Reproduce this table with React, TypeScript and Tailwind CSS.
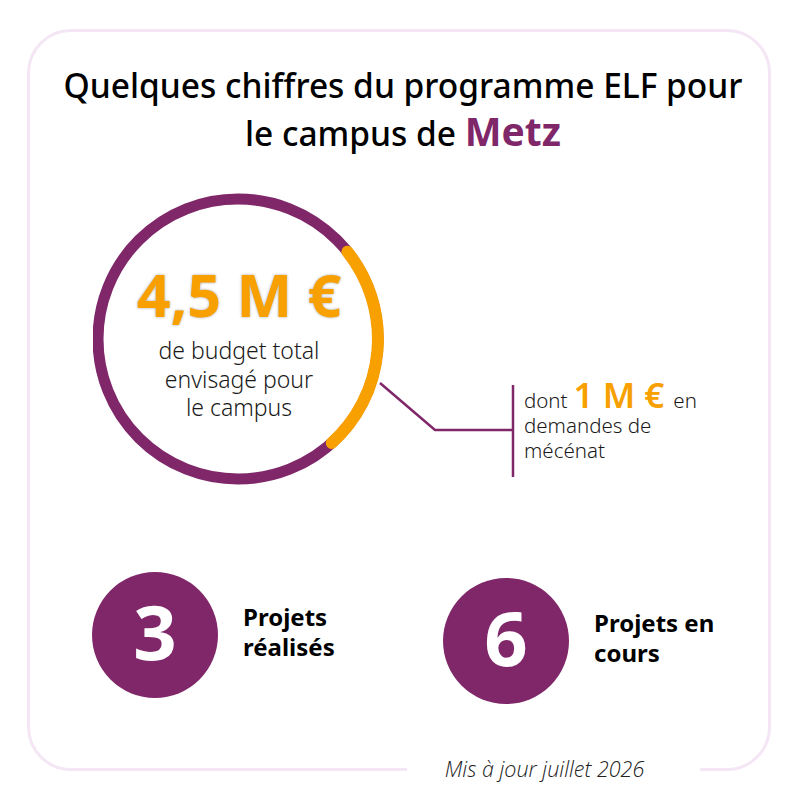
const purple = "#7f2769";
const orange = "#f8a000";

function BudgetRing() {
  return (
    <div className="relative h-[292px] w-[422px] shrink-0">
      <svg
        className="absolute inset-0"
        width="422"
        height="292"
        viewBox="0 0 422 292"
        fill="none"
      >
        <circle cx="145" cy="146" r="140" stroke={purple} strokeWidth="11" />
        <path
          d="M 254.4 58.7 A 140 140 0 0 1 238.8 249.9"
          stroke={orange}
          strokeWidth="12"
          strokeLinecap="round"
        />
        <path
          d="M 287 190 L 342 237 L 420 237"
          stroke={purple}
          strokeWidth="2.5"
        />
        <path d="M 420 192 L 420 284" stroke={purple} strokeWidth="2.5" />
      </svg>
      <div className="absolute left-0 top-0 flex h-[292px] w-[292px] flex-col items-center pt-[72px] text-center">
        <div className="text-[59px] font-bold leading-none text-[#f8a000] [text-shadow:0_0_3px_rgba(0,0,0,0.35)]">
          4,5 M €
        </div>
        <p className="mt-[12px] text-[23px] font-light leading-[28.5px] text-[#1a1a1a]">
          de budget total
          <br />
          envisagé pour
          <br />
          le campus
        </p>
      </div>
    </div>
  );
}

function Stat({ value, label, className }: { value: string; label: string[]; className?: string }) {
  return (
    <div className={`flex items-start gap-[25px] ${className ?? ""}`}>
      <div className="flex h-[126px] w-[126px] shrink-0 items-center justify-center rounded-full bg-[#7f2769] pb-2">
        <span className="text-[76px] font-bold leading-none text-white">{value}</span>
      </div>
      <p className="mt-[30px] text-[24px] font-bold leading-[30px] text-black">
        {label[0]}
        <br />
        {label[1]}
      </p>
    </div>
  );
}

export default function App() {
  return (
    <div className="min-h-[800px] w-[800px] bg-white pl-[27px] pt-[29px] font-['Noto_Sans',sans-serif]">
      <div className="relative h-[742px] w-[744px] rounded-[44px] border-[3px] border-[#f4e6f4]">
        <h1 className="pl-[8px] pt-[29px] text-center text-[33.5px] font-medium leading-[48px] text-black">
          Quelques chiffres du programme ELF pour
          <br />
          le campus de{" "}
          <span className="text-[39px] font-bold leading-none text-[#7f2769]">Metz</span>
        </h1>

        <div className="mt-[36px] flex items-start pl-[63px]">
          <BudgetRing />
          <div className="ml-[9px] mt-[187px] text-[20.5px] font-light leading-[25px] text-[#1a1a1a]">
            <div className="flex items-baseline">
              <span>dont</span>
              <span className="ml-[6px] text-[35px] font-semibold leading-[30px] text-[#f8a000]">1 M €</span>
              <span className="ml-[9px]">en</span>
            </div>
            <div>demandes de</div>
            <div>mécénat</div>
          </div>
        </div>

        <div className="mt-[87px] flex items-start pl-[62px]">
          <Stat value="3" label={["Projets", "réalisés"]} className="w-[351px]" />
          <Stat value="6" label={["Projets en", "cours"]} className="mt-[6px]" />
        </div>

        <span className="absolute left-[377px] top-[722px] flex h-[30px] w-[293px] items-center justify-center bg-white pr-[18px] font-['Open_Sans',sans-serif] text-[21.5px] font-light italic text-[#222]">
          Mis à jour juillet 2026
        </span>
      </div>
    </div>
  );
}
